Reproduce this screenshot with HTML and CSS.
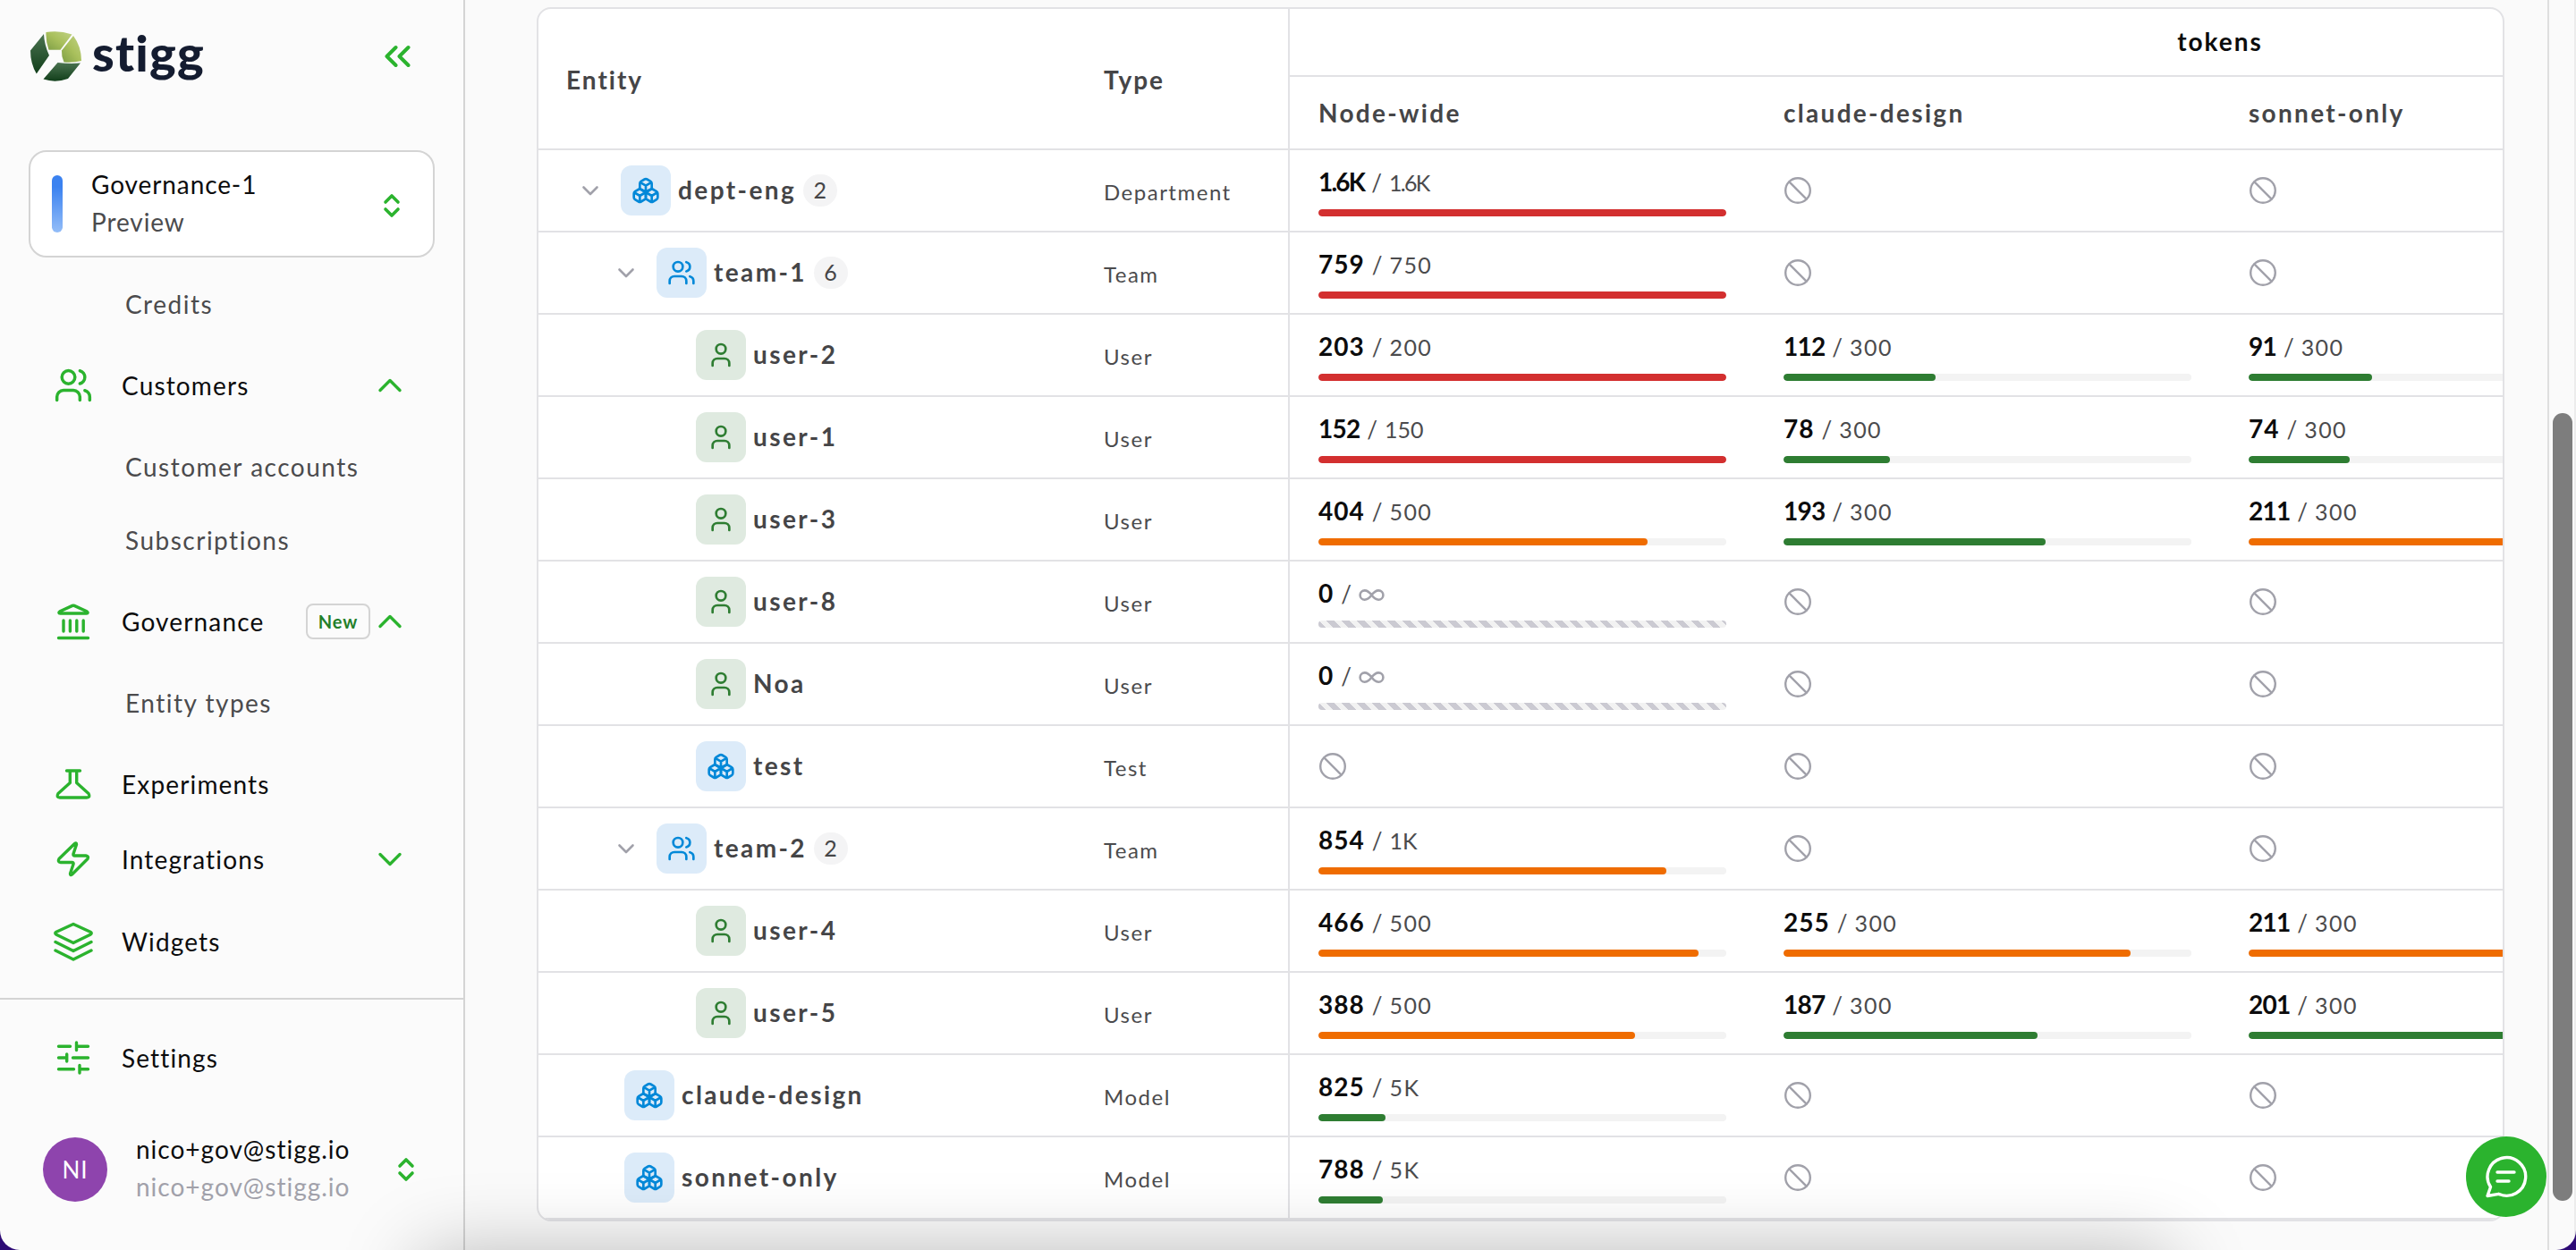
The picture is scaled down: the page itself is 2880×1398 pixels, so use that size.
FILE: index.html
```html
<!DOCTYPE html>
<html lang="en">

<head>
    <meta charset="UTF-8">
    <meta name="viewport" content="width=device-width, initial-scale=1.0">
    <title>Stigg - Governance</title>
    <link rel="stylesheet" href="styles.css">
</head>

<body>
    <svg class="sprite" aria-hidden="true">
        <symbol id="i-users" viewBox="0 0 24 24">
            <path d="M16 21v-2a4 4 0 0 0-4-4H6a4 4 0 0 0-4 4v2M22 21v-2a4 4 0 0 0-3-3.87M16 3.13a4 4 0 0 1 0 7.75"/>
            <circle cx="9" cy="7" r="4"/>
        </symbol>
        <symbol id="i-user" viewBox="0 0 24 24">
            <path d="M19 21v-2a4 4 0 0 0-4-4H9a4 4 0 0 0-4 4v2"/>
            <circle cx="12" cy="7" r="4"/>
        </symbol>
        <symbol id="i-boxes" viewBox="0 0 24 24">
            <path d="M2.97 12.92A2 2 0 0 0 2 14.63v3.24a2 2 0 0 0 .97 1.71l3 1.8a2 2 0 0 0 2.06 0L12 19v-5.5l-5-3-4.03 2.42ZM7 16.5l-4.74-2.85M7 16.5l5-3M7 16.5v5.17"/>
            <path d="M12 13.5V19l3.97 2.38a2 2 0 0 0 2.06 0l3-1.8a2 2 0 0 0 .97-1.71v-3.24a2 2 0 0 0-.97-1.71L17 10.5l-5 3ZM17 16.5l-5-3M17 16.5l4.74-2.85M17 16.5v5.17"/>
            <path d="M7.97 4.42A2 2 0 0 0 7 6.13v4.37l5 3 5-3V6.13a2 2 0 0 0-.97-1.71l-3-1.8a2 2 0 0 0-2.06 0l-3 1.8ZM12 8L7.26 5.15M12 8l4.74-2.85M12 13.5V8"/>
        </symbol>
        <symbol id="i-down" viewBox="0 0 24 24"><path d="M4.5 8.5l7.5 7.5 7.5-7.5"/></symbol>
        <symbol id="i-ban" viewBox="0 0 32 32"><circle cx="16" cy="16" r="13.8"/><path d="M6.4 6.4l19.2 19.2"/></symbol>
        <symbol id="i-infinity" viewBox="0 0 24 24">
            <path d="M12 12c-2-2.67-4-4-6-4a4 4 0 1 0 0 8c2 0 4-1.33 6-4Zm0 0c2 2.67 4 4 6 4a4 4 0 0 0 0-8c-2 0-4 1.33-6 4Z"/>
        </symbol>
        <symbol id="i-sort" viewBox="0 0 20 28"><path d="M3 10l7-7 7 7M3 18l7 7 7-7"/></symbol>
        <symbol id="i-chev" viewBox="0 0 28 18"><path d="M3 3.5l11 11 11-11"/></symbol>
    </svg>

    <div class="app">
        <aside class="sidebar">
            <div class="brand">
                <svg class="mark" viewBox="0 0 57 56">
                    <defs>
                        <linearGradient id="light" x1="0" y1="1" x2="1" y2="0">
                            <stop offset="0" stop-color="#7f9f46"/>
                            <stop offset=".5" stop-color="#a9c05c"/>
                            <stop offset="1" stop-color="#c0d184"/>
                        </linearGradient>
                        <linearGradient id="dark" x1="0" y1="0" x2="0" y2="1">
                            <stop offset="0" stop-color="#4a7350"/>
                            <stop offset="1" stop-color="#123f1b"/>
                        </linearGradient>
                    </defs>
                    <path fill="url(#light)" d="M17.5 1Q32-1.500 46.500 3.500L33.500 20.700H20.500Q17 11 17.500 1Z"/>
                    <path fill="url(#light)" d="M48 5Q57 17 57 33Q48 35.500 37.500 34.500Q34.500 28 35 21.500Z"/>
                    <path fill="url(#dark)" d="M30.500 35Q44 36.500 56 35.500L42 53Q28 58 14.500 53.500Z"/>
                    <path fill="url(#dark)" d="M15 3Q15.500 15 21 27L6.800 47.500Q0 36 0 21.500Z"/>
                </svg>
                <span class="wordmark">stigg</span>
                <svg class="collapse" viewBox="0 0 30 26"><path d="M13.500 3L3.500 13l10 10M27.500 3l-10 10 10 10"/></svg>
            </div>

            <div class="env">
                <span class="env-bar"></span>
                <div class="env-text">
                    <div>Governance-1</div>
                    <div class="muted">Preview</div>
                </div>
                <svg class="sort"><use href="#i-sort"/></svg>
            </div>

            <nav class="nav">
                <a class="sub">Credits</a>
                <a class="item">
                    <svg class="ico users"><use href="#i-users"/></svg>
                    <span class="label">Customers</span>
                    <svg class="chev up"><use href="#i-chev"/></svg>
                </a>
                <a class="sub">Customer accounts</a>
                <a class="sub">Subscriptions</a>
                <a class="item">
                    <svg class="ico" viewBox="0 0 44 44"><path d="M7 10.800L21 4.400Q22 4 23 4.400L37 10.800Q39.500 12.700 36.500 13H7.500Q4.500 12.700 7 10.800ZM11 21v12M18.400 21v12M25.800 21v12M33.200 21v12M5.500 40.500h33"/></svg>
                    <span class="label">Governance</span>
                    <span class="new">New</span>
                    <svg class="chev up"><use href="#i-chev"/></svg>
                </a>
                <a class="sub">Entity types</a>
                <a class="item">
                    <svg class="ico" viewBox="0 0 44 44"><path d="M14.500 7h15M18.300 7v13.500L5 32.500Q2.500 37 7 37H37Q41.500 37 39 32.500L25.700 20.500V7"/></svg>
                    <span class="label">Experiments</span>
                </a>
                <a class="item short">
                    <svg class="ico" viewBox="0 0 44 44"><path d="M23.500 4.500L6 21.500Q4 25 8 25.500H20.500Q22.500 25.500 22 27.500L18.500 38Q18.500 40.500 20.500 39L38 21.500Q39.500 18.500 36 18H23.500Q21.500 18 22 16L25.500 5.500Q25.500 3 23.500 4.500Z"/></svg>
                    <span class="label">Integrations</span>
                    <svg class="chev"><use href="#i-chev"/></svg>
                </a>
                <a class="item tall">
                    <svg class="ico" viewBox="0 0 44 44"><path d="M22 2.500L41 11.300Q43.500 12.700 41 14.200L22 23.500L3 14.200Q.5 12.700 3 11.300ZM2 22.500l20 10 20-10M2 32l20 10 20-10"/></svg>
                    <span class="label">Widgets</span>
                </a>
            </nav>

            <div class="bottom">
                <a class="item settings">
                    <svg class="ico" viewBox="0 0 44 44"><path d="M5.500 9.300h13M25.500 5v8.600M25.500 9.300h13M5.500 22h9M14.700 18v8M21.500 22h17M5.500 34.700h17M29 30.500v8.600M29 34.700h9.500"/></svg>
                    <span class="label">Settings</span>
                </a>
                <div class="account">
                    <span class="avatar">NI</span>
                    <div class="mail">
                        <div>nico+gov@stigg.io</div>
                        <div class="faint">nico+gov@stigg.io</div>
                    </div>
                    <svg class="sort"><use href="#i-sort"/></svg>
                </div>
            </div>
        </aside>

        <main class="main">
            <div class="table">
                <div class="thead">
                    <div class="th entity">Entity</div>
                    <div class="th type">Type</div>
                    <div class="group">
                        <div class="group-name">tokens</div>
                        <div class="group-cols">
                            <div class="th">Node-wide</div>
                            <div class="th">claude-design</div>
                            <div class="th">sonnet-only</div>
                        </div>
                    </div>
                </div>
                <div id="rows"></div>
            </div>
        </main>

        <div class="scroll"><div class="thumb"></div></div>
    </div>

    <div class="chat">
        <svg viewBox="0 0 90 90"><path d="M27.500 56.500A21.300 21.300 0 1 1 36.500 64.300L24 66.500ZM35 40h19M35 50h13"/></svg>
    </div>
    <div class="dock"><div class="dock-shadow"></div></div>
    <div class="corners"></div>

    <script>
        // [level, icon, name, type, children, usage cells]
        const data = [
            [0, 'boxes', 'dept-eng', 'Department', 2, [['1.6K', '1.6K', 100, 'red'], null, null]],
            [1, 'users', 'team-1', 'Team', 6, [['759', '750', 100, 'red'], null, null]],
            [2, 'user', 'user-2', 'User', 0, [['203', '200', 100, 'red'], ['112', '300', 37.3, 'green'], ['91', '300', 30.3, 'green']]],
            [2, 'user', 'user-1', 'User', 0, [['152', '150', 100, 'red'], ['78', '300', 26, 'green'], ['74', '300', 24.7, 'green']]],
            [2, 'user', 'user-3', 'User', 0, [['404', '500', 80.8, 'orange'], ['193', '300', 64.3, 'green'], ['211', '300', 70.3, 'orange']]],
            [2, 'user', 'user-8', 'User', 0, [['0', '', 0, 'none'], null, null]],
            [2, 'user', 'Noa', 'User', 0, [['0', '', 0, 'none'], null, null]],
            [2, 'boxes', 'test', 'Test', 0, [null, null, null]],
            [1, 'users', 'team-2', 'Team', 2, [['854', '1K', 85.4, 'orange'], null, null]],
            [2, 'user', 'user-4', 'User', 0, [['466', '500', 93.2, 'orange'], ['255', '300', 85, 'orange'], ['211', '300', 70.3, 'orange']]],
            [2, 'user', 'user-5', 'User', 0, [['388', '500', 77.6, 'orange'], ['187', '300', 62.3, 'green'], ['201', '300', 67, 'green']]],
            [3, 'boxes', 'claude-design', 'Model', 0, [['825', '5K', 16.5, 'green'], null, null]],
            [3, 'boxes', 'sonnet-only', 'Model', 0, [['788', '5K', 15.8, 'green'], null, null]]
        ];

        // numbers with ones or a decimal point are set tighter
        function spacing(text) {
            if (text.includes('.')) return 'tighter';
            return /1/.test(text) ? 'tight' : '';
        }

        function cell(c) {
            if (!c) return '<div class="cell empty"><svg class="ban"><use href="#i-ban"/></svg></div>';
            let limit = c[1] ? `<span class="limit ${spacing(c[1])}">${c[1]}</span>` : '<svg class="inf"><use href="#i-infinity"/></svg>';
            let bar = c[1] ? `<div class="track"><div class="fill ${c[3]}" style="width: ${c[2]}%"></div></div>` : '<div class="track striped"></div>';
            return `<div class="cell"><div class="value"><b class="${spacing(c[0])}">${c[0]}</b><span class="slash">/</span>${limit}</div>${bar}</div>`;
        }

        let html = '';
        for (const [level, icon, name, type, count, cells] of data) {
            html += `<div class="row">
                <div class="td entity level-${level}">
                    ${count ? '<svg class="caret"><use href="#i-down"/></svg>' : ''}
                    <span class="tile ${icon}"><svg><use href="#i-${icon}"/></svg></span>
                    <span class="name">${name}</span>
                    ${count ? `<span class="count">${count}</span>` : ''}
                </div>
                <div class="td type">${type}</div>
                <div class="cells">${cells.map(cell).join('')}</div>
            </div>`;
        }
        document.getElementById('rows').innerHTML = html;
    </script>
</body>

</html>
```
FILE: styles.css
```css
* {
    box-sizing: border-box;
}

html {
    overflow: hidden;
}

body {
    margin: 0;
    height: 1398px;
    overflow: hidden;
    position: relative;
    background-color: #fafafa;
    font-family: Lato, "Open Sans", sans-serif;
    font-size: 28px;
    letter-spacing: 0.9px;
    color: #0c0c0d;
}

svg {
    fill: none;
    stroke: currentColor;
    stroke-width: 2;
    stroke-linecap: round;
    stroke-linejoin: round;
    flex-shrink: 0;
}

.sprite {
    display: none;
}

.app {
    display: flex;
    height: 1398px;
}

/* sidebar */
.sidebar {
    width: 520px;
    flex-shrink: 0;
    border-right: 2px solid #d4d4d4;
    background-color: #fbfbfb;
    display: flex;
    flex-direction: column;
}

.brand {
    display: flex;
    align-items: center;
    height: 126px;
    padding: 0 59px 0 34px;
}

.mark {
    width: 57px;
    height: 56px;
    stroke: none;
}

.wordmark {
    margin-left: 12px;
    font-size: 56px;
    line-height: 56px;
    font-weight: 900;
    letter-spacing: 1.2px;
    color: #141c30;
    padding-bottom: 8px;
}

.collapse {
    width: 30px;
    height: 26px;
    margin-left: auto;
    color: #2bb32e;
    stroke-width: 4;
}

.env {
    display: flex;
    align-items: center;
    height: 120px;
    margin: 42px 32px 11px;
    padding: 0 36px 0 24px;
    border: 2px solid #d4d4d4;
    border-radius: 20px;
    background-color: #fff;
}

.env-bar {
    width: 12px;
    height: 64px;
    border-radius: 6px;
    background: linear-gradient(#3b82f0 20%, #93bdf8);
}

.env-text {
    flex: 1;
    margin-left: 32px;
    line-height: 42px;
    padding-bottom: 3px;
}

.muted {
    color: #4b4b4d;
}

.sort {
    width: 20px;
    height: 28px;
    color: #2bb32e;
    stroke-width: 3.6;
}

.env .sort {
    margin-top: 3px;
}

.sub {
    display: flex;
    align-items: center;
    height: 82px;
    padding-left: 140px;
    letter-spacing: 1.5px;
    color: #4b4b4d;
}

.item {
    display: flex;
    align-items: center;
    height: 100px;
    padding: 0 68px 0 60px;
}

.item.short {
    height: 68px;
}

.item.tall {
    height: 116px;
}

.ico {
    width: 44px;
    height: 44px;
    color: #2bb32e;
    stroke-width: 3.4;
}

.ico.users {
    stroke-width: 1.9;
}

.label {
    flex: 1;
    margin-left: 32px;
    letter-spacing: 1.15px;
}

.chev {
    width: 28px;
    height: 18px;
    color: #2bb32e;
    stroke-width: 3.4;
}

.chev.up {
    transform: scaleY(-1);
}

.new {
    width: 72px;
    height: 40px;
    margin-right: 8px;
    border: 2px solid #d4d4d4;
    border-radius: 8px;
    font-size: 20px;
    font-weight: 700;
    line-height: 36px;
    text-align: center;
    color: #23802a;
}

.bottom {
    margin-top: 5px;
    border-top: 2px solid #d4d4d4;
}

.settings {
    height: 130px;
}

.account {
    display: flex;
    align-items: center;
    height: 119px;
    padding: 0 54px 0 48px;
}

.avatar {
    width: 72px;
    height: 72px;
    border-radius: 50%;
    background-color: #8e44ad;
    color: #fff;
    font-size: 26px;
    line-height: 72px;
    text-align: center;
}

.mail {
    flex: 1;
    margin-left: 32px;
    line-height: 42px;
    padding-bottom: 3px;
    letter-spacing: 1px;
}

.faint {
    color: #a1a1aa;
}

/* table */
.main {
    flex: 1;
    padding: 8px 48px 0 80px;
    min-width: 0;
}

.table {
    width: 2200px;
    height: 1358px;
    border: 2px solid #e2e2e5;
    border-radius: 16px;
    background-color: #fff;
    overflow: hidden;
}

.thead,
.row {
    display: flex;
    width: 2920px;
    border-bottom: 2px solid #e2e2e5;
}

.thead {
    height: 158px;
}

.row {
    height: 92px;
}

.entity {
    width: 601px;
    padding-left: 31px;
}

.type {
    width: 237px;
    padding-left: 31px;
}

.th {
    display: flex;
    align-items: center;
    font-weight: 700;
    letter-spacing: 2.3px;
    color: #454547;
}

.thead > .th {
    padding-top: 1px;
    letter-spacing: 2px;
}

.group,
.cells {
    flex: 1;
    border-left: 2px solid #e2e2e5;
}

.group-name {
    height: 76px;
    border-bottom: 2px solid #e2e2e5;
    font-weight: 700;
    letter-spacing: 2px;
    line-height: 72px;
    text-align: center;
}

.group-cols {
    display: grid;
    grid-template-columns: repeat(4, 520px);
    height: 80px;
}

.group-cols .th {
    padding-left: 32px;
}

.td {
    display: flex;
    align-items: center;
}

.td.type {
    font-size: 24px;
    letter-spacing: 1.5px;
    padding-top: 3px;
    color: #4b4b4d;
}

.level-0 {
    padding-left: 46px;
}

.level-1 {
    padding-left: 86px;
}

.level-2 {
    padding-left: 176px;
}

.level-3 {
    padding-left: 96px;
}

.caret {
    width: 24px;
    height: 24px;
    margin-right: 22px;
    color: #a1a1aa;
    stroke-width: 2.6;
}

.tile {
    display: flex;
    align-items: center;
    justify-content: center;
    width: 56px;
    height: 56px;
    border-radius: 12px;
    background-color: #dcebf9;
    color: #0288d8;
}

.tile.user {
    background-color: #dfeae0;
    color: #2e7d32;
}

.tile svg {
    width: 32px;
    height: 32px;
}

.name {
    margin-left: 8px;
    font-weight: 700;
    letter-spacing: 2.4px;
    color: #454547;
    padding-bottom: 3px;
}

.count {
    min-width: 38px;
    height: 36px;
    margin-left: 8px;
    border-radius: 19px;
    background-color: #f4f4f5;
    font-size: 25px;
    line-height: 35px;
    text-align: center;
    color: #454547;
}

.cells {
    display: grid;
    grid-template-columns: repeat(4, 520px);
}

.cell {
    padding: 18px 32px 0;
}

.cell.empty {
    display: flex;
    align-items: center;
    padding-top: 0;
}

.ban {
    width: 32px;
    height: 32px;
    color: #a1a1aa;
    stroke-width: 2.4;
}

.value {
    display: flex;
    align-items: baseline;
    height: 34px;
    line-height: 34px;
}

.value b {
    letter-spacing: 1px;
}

.value b.tight {
    letter-spacing: -0.8px;
}

.value b.tighter {
    letter-spacing: -1.8px;
}

.slash {
    margin: 0 8px 0 8px;
    font-size: 26px;
    letter-spacing: 0;
    color: #4b4b4d;
}

.limit {
    font-size: 25px;
    letter-spacing: 1.4px;
    color: #4b4b4d;
}

.limit.tight {
    letter-spacing: 0;
}

.limit.tighter {
    letter-spacing: -1.7px;
}

.inf {
    width: 31px;
    height: 31px;
    align-self: center;
    margin: 5px 0 0 -1px;
    color: #a1a1aa;
}

.track {
    height: 8px;
    margin-top: 14px;
    border-radius: 4px;
    background-color: #f3f3f3;
    overflow: hidden;
}

.striped {
    background: repeating-linear-gradient(45deg, #cbcad2 0, #cbcad2 6px, #f2f2f2 6px, #f2f2f2 12px);
}

.fill {
    height: 8px;
    border-radius: 4px;
}

.red {
    background-color: #d32f2f;
}

.green {
    background-color: #2e7d32;
}

.orange {
    background-color: #ef6c00;
}

/* page scrollbar */
.scroll {
    width: 32px;
    border-left: 2px solid #dedede;
    border-right: 2px solid #ececec;
    padding: 462px 2px 0 4px;
}

.thumb {
    width: 22px;
    height: 881px;
    border-radius: 11px;
    background-color: #7d7d7d;
}

.chat {
    position: absolute;
    left: 2757px;
    top: 1271px;
    width: 90px;
    height: 90px;
    border-radius: 50%;
    background-color: #2bb32e;
    color: #fff;
}

.chat svg {
    display: block;
    stroke-width: 3.4;
}

/* soft shadow rising from the bottom of the window */
.dock {
    position: absolute;
    left: 0;
    right: 0;
    bottom: 0;
    height: 140px;
    padding: 140px 455px 0 470px;
    overflow: hidden;
}

.dock-shadow {
    height: 200px;
    box-shadow: 0 6px 88px rgba(0, 0, 0, 0.28);
}

/* rounded window corners over the wallpaper */
.corners {
    position: absolute;
    left: 0;
    right: 0;
    bottom: 0;
    height: 60px;
    border-radius: 0 0 22px 22px;
    box-shadow: 0 22px 0 0 #2d0a75;
    clip-path: inset(0);
}
```
